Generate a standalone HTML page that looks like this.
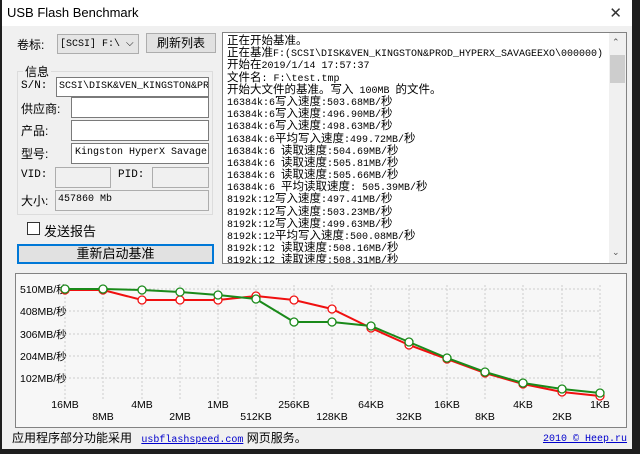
<!DOCTYPE html>
<html><head><meta charset="utf-8"><style>
*{margin:0;padding:0;box-sizing:border-box}
body{width:640px;height:454px;background:#1e1e1e;position:relative;overflow:hidden;font-family:"Liberation Sans","Noto Sans CJK SC",sans-serif;font-size:12px;color:#000}
#win{position:absolute;left:2px;top:0;width:630px;height:449px;background:#f0f0f0}
#title{position:absolute;left:0;top:0;width:630px;height:26px;background:#fff;font-size:13px;line-height:26px;padding-left:5px}
#x{position:absolute;right:10px;top:1px;font-size:15px;font-weight:300;color:#333}
.a{position:absolute;white-space:nowrap}
.in{position:absolute;background:#fff;border:1px solid #7a7a7a;font-family:"Liberation Mono","Noto Sans CJK SC",monospace;font-size:10px;line-height:18px;padding-left:2px;overflow:hidden;white-space:nowrap}
.dis{background:#f0f0f0;border:1px solid #adadad}
.btn{position:absolute;background:#e1e1e1;border:1px solid #adadad;text-align:center}
#log{position:absolute;left:220px;top:32px;width:405px;height:232px;background:#fff;border:1px solid #828282;overflow:hidden}
#logt{position:absolute;left:4px;top:1px;font-family:"Liberation Mono","Noto Sans CJK SC",monospace;font-size:10px}
#logt div{height:12.2px;line-height:12px;white-space:pre}
#logt b{font-weight:normal;font-family:"Noto Sans CJK SC",sans-serif;font-size:11.5px;line-height:12px}
#sb{position:absolute;right:0;top:0;width:17px;height:230px;background:#f0f0f0}
a{color:#00c;text-decoration:underline}
</style></head><body>
<div id="win">
<div id="title">USB Flash Benchmark<span id="x">✕</span></div>
<div class="a" style="left:15px;top:36px">卷标:</div>
<div class="in" style="left:55px;top:34px;width:82px;height:20px;background:#e5e5e5;border-color:#adadad">[SCSI] F:\ <span style="font-family:'Liberation Sans'">⌵</span></div>
<div class="btn" style="left:144px;top:33px;width:70px;height:20px;line-height:18px">刷新列表</div>
<div style="position:absolute;left:15px;top:71px;width:196px;height:144px;border:1px solid #dcdcdc"></div>
<div class="a" style="left:21px;top:63px;background:#f0f0f0;padding:0 2px">信息</div>
<div class="a" style="left:19px;top:80px;font-family:'Liberation Mono',monospace;font-size:11px">S/N:</div>
<div class="in" style="left:54px;top:77px;width:153px;height:20px">SCSI\DISK&amp;VEN_KINGSTON&amp;PROD</div>
<div class="a" style="left:19px;top:100px">供应商:</div>
<div class="in" style="left:69px;top:97px;width:138px;height:21px"></div>
<div class="a" style="left:19px;top:122px">产品:</div>
<div class="in" style="left:69px;top:120px;width:138px;height:21px"></div>
<div class="a" style="left:19px;top:145px">型号:</div>
<div class="in" style="left:69px;top:143px;width:138px;height:21px;padding-left:3px">Kingston HyperX Savage</div>
<div class="a" style="left:19px;top:169px;font-family:'Liberation Mono',monospace;font-size:11px">VID:</div>
<div class="in dis" style="left:53px;top:167px;width:56px;height:21px"></div>
<div class="a" style="left:116px;top:169px;font-family:'Liberation Mono',monospace;font-size:11px">PID:</div>
<div class="in dis" style="left:150px;top:167px;width:57px;height:21px"></div>
<div class="a" style="left:19px;top:192px">大小:</div>
<div class="in dis" style="left:53px;top:190px;width:154px;height:21px">457860 Mb</div>
<div style="position:absolute;left:25px;top:222px;width:13px;height:13px;background:#fff;border:1px solid #333"></div>
<div class="a" style="left:42px;top:221px;font-size:13px">发送报告</div>
<div class="btn" style="left:15px;top:244px;width:197px;height:20px;border:2px solid #0078d7;line-height:16px;font-size:13px">重新启动基准</div>
<div id="log"><div id="logt">
<div><b>正在开始基准。</b></div>
<div><b>正在基准</b>F:(SCSI\DISK&amp;VEN_KINGSTON&amp;PROD_HYPERX_SAVAGEEXO\000000)</div>
<div><b>开始在</b>2019/1/14 17:57:37</div>
<div><b>文件名</b>: F:\test.tmp</div>
<div><b>开始大文件的基准。写入</b> 100MB <b>的文件。</b></div>
<div>16384k:6<b>写入速度</b>:503.68MB/<b>秒</b></div>
<div>16384k:6<b>写入速度</b>:496.90MB/<b>秒</b></div>
<div>16384k:6<b>写入速度</b>:498.63MB/<b>秒</b></div>
<div>16384k:6<b>平均写入速度</b>:499.72MB/<b>秒</b></div>
<div>16384k:6 <b>读取速度</b>:504.69MB/<b>秒</b></div>
<div>16384k:6 <b>读取速度</b>:505.81MB/<b>秒</b></div>
<div>16384k:6 <b>读取速度</b>:505.66MB/<b>秒</b></div>
<div>16384k:6 <b>平均读取速度</b>: 505.39MB/<b>秒</b></div>
<div>8192k:12<b>写入速度</b>:497.41MB/<b>秒</b></div>
<div>8192k:12<b>写入速度</b>:503.23MB/<b>秒</b></div>
<div>8192k:12<b>写入速度</b>:499.63MB/<b>秒</b></div>
<div>8192k:12<b>平均写入速度</b>:500.08MB/<b>秒</b></div>
<div>8192k:12 <b>读取速度</b>:508.16MB/<b>秒</b></div>
<div>8192k:12 <b>读取速度</b>:508.31MB/<b>秒</b></div>
</div>
<div id="sb"><div style="position:absolute;left:3px;top:4px;font-size:9px;color:#555">⌃</div><div style="position:absolute;left:1px;top:22px;width:15px;height:28px;background:#cdcdcd"></div><div style="position:absolute;left:3px;top:214px;font-size:9px;color:#555">⌄</div></div>
</div>
<div style="position:absolute;left:13px;top:273px;width:612px;height:155px;border:1px solid #828282;background:#f7f7f7"></div>
<svg style="position:absolute;left:0;top:0" width="630" height="449" font-family="Liberation Sans, Noto Sans CJK SC, sans-serif" font-size="11">
<g stroke="#ccc" stroke-dasharray="2,2" stroke-width="1">
<line x1="63" y1="289" x2="598" y2="289"/><line x1="63" y1="311" x2="598" y2="311"/><line x1="63" y1="334" x2="598" y2="334"/><line x1="63" y1="356" x2="598" y2="356"/><line x1="63" y1="378" x2="598" y2="378"/>
</g>
<g stroke="#ccc" stroke-dasharray="2,2">
<line x1="63" y1="285" x2="63" y2="400"/><line x1="101" y1="285" x2="101" y2="400"/><line x1="140" y1="285" x2="140" y2="400"/><line x1="178" y1="285" x2="178" y2="400"/><line x1="216" y1="285" x2="216" y2="400"/><line x1="254" y1="285" x2="254" y2="400"/><line x1="292" y1="285" x2="292" y2="400"/><line x1="330" y1="285" x2="330" y2="400"/><line x1="369" y1="285" x2="369" y2="400"/><line x1="407" y1="285" x2="407" y2="400"/><line x1="445" y1="285" x2="445" y2="400"/><line x1="483" y1="285" x2="483" y2="400"/><line x1="521" y1="285" x2="521" y2="400"/><line x1="560" y1="285" x2="560" y2="400"/><line x1="598" y1="285" x2="598" y2="400"/>
</g>
<g font-size="10.5"><text x="18" y="293">510MB/秒</text><text x="18" y="315">408MB/秒</text><text x="18" y="338">306MB/秒</text><text x="18" y="360">204MB/秒</text><text x="18" y="382">102MB/秒</text></g>
<g font-size="10.5" text-anchor="middle">
<text x="63" y="408">16MB</text><text x="140" y="408">4MB</text><text x="216" y="408">1MB</text><text x="292" y="408">256KB</text><text x="369" y="408">64KB</text><text x="445" y="408">16KB</text><text x="521" y="408">4KB</text><text x="598" y="408">1KB</text>
<text x="101" y="420">8MB</text><text x="178" y="420">2MB</text><text x="254" y="420">512KB</text><text x="330" y="420">128KB</text><text x="407" y="420">32KB</text><text x="483" y="420">8KB</text><text x="560" y="420">2KB</text>
</g>
<g fill="#fff" stroke-width="1.3">
<polyline fill="none" stroke="#f01010" stroke-width="2" points="63,290 101,290 140,300 178,300 216,300 254,296 292,300 330,309 369,328 407,345 445,359 483,373 521,384 560,392 598,396"/>
<g stroke="#f01010"><circle cx="63" cy="290" r="4"/><circle cx="101" cy="290" r="4"/><circle cx="140" cy="300" r="4"/><circle cx="178" cy="300" r="4"/><circle cx="216" cy="300" r="4"/><circle cx="254" cy="296" r="4"/><circle cx="292" cy="300" r="4"/><circle cx="330" cy="309" r="4"/><circle cx="369" cy="328" r="4"/><circle cx="407" cy="345" r="4"/><circle cx="445" cy="359" r="4"/><circle cx="483" cy="373" r="4"/><circle cx="521" cy="384" r="4"/><circle cx="560" cy="392" r="4"/><circle cx="598" cy="396" r="4"/></g>
<polyline fill="none" stroke="#1a8a1a" stroke-width="2" points="63,289 101,289 140,290 178,292 216,295 254,299 292,322 330,322 369,326 407,342 445,358 483,372 521,383 560,389 598,393"/>
<g stroke="#1a8a1a"><circle cx="63" cy="289" r="4"/><circle cx="101" cy="289" r="4"/><circle cx="140" cy="290" r="4"/><circle cx="178" cy="292" r="4"/><circle cx="216" cy="295" r="4"/><circle cx="254" cy="299" r="4"/><circle cx="292" cy="322" r="4"/><circle cx="330" cy="322" r="4"/><circle cx="369" cy="326" r="4"/><circle cx="407" cy="342" r="4"/><circle cx="445" cy="358" r="4"/><circle cx="483" cy="372" r="4"/><circle cx="521" cy="383" r="4"/><circle cx="560" cy="389" r="4"/><circle cx="598" cy="393" r="4"/></g>
</g>
</svg>
<div class="a" style="left:10px;top:429px">应用程序部分功能采用 <a style="font-family:'Liberation Mono',monospace;font-size:10px;margin-left:6px">usbflashspeed.com</a> 网页服务。</div>
<div class="a" style="left:541px;top:430px"><a style="font-family:'Liberation Mono',monospace;font-size:10px">2010 © Heep.ru</a></div>
</div>
</body></html>
